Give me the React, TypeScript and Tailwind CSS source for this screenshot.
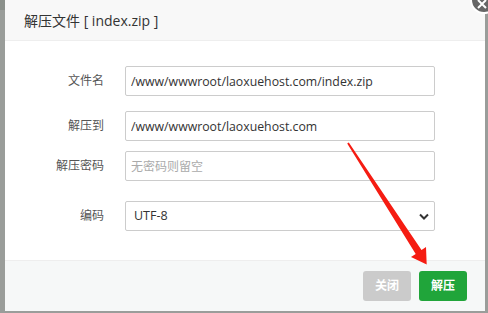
import React from "react";

const FONT = { fontFamily: '"Open Sans", "Noto Sans CJK SC", sans-serif' };

function Row({ label, mt, children }: { label: string; mt: string; children: React.ReactNode }) {
  return (
    <div className={`flex items-center ${mt}`}>
      <div className="w-[99px] text-right text-[12px] text-[#555]">{label}</div>
      <div className="ml-[21px] w-[310px]">{children}</div>
    </div>
  );
}

export default function App() {
  return (
    <div className="relative h-[313px] w-[488px] overflow-hidden bg-[#9a9d9a]" style={FONT}>
      <div className="h-[10px] w-[5px] bg-[#8b908b] absolute left-0 top-0" />
      <div className="ml-[5px] flex h-[311px] w-[480px] flex-col bg-white">
        <div className="flex h-[41px] items-center border-b border-[#eee] bg-[#f8f8f8] pl-[19px] text-[14px] text-[#333]">
          解压文件 [ index.zip ]
        </div>
        <div className="flex-1 pt-[25px]">
          <Row label="文件名" mt="mt-0">
            <input
              readOnly
              value="/www/wwwroot/laoxuehost.com/index.zip"
              className="h-[30px] w-full rounded-[2px] border border-[#ccc] px-[5px] text-[12.3px] text-[#333] outline-none"
              style={FONT}
            />
          </Row>
          <Row label="解压到" mt="mt-[15px]">
            <input
              readOnly
              value="/www/wwwroot/laoxuehost.com"
              className="h-[30px] w-full rounded-[2px] border border-[#ccc] px-[5px] text-[12.3px] text-[#333] outline-none"
              style={FONT}
            />
          </Row>
          <Row label="解压密码" mt="mt-[10px]">
            <input
              readOnly
              placeholder="无密码则留空"
              className="h-[30px] w-full rounded-[2px] border border-[#ccc] px-[5px] text-[12px] text-[#333] outline-none placeholder:text-[#aaa]"
              style={FONT}
            />
          </Row>
          <Row label="编码" mt="mt-[20px]">
            <div className="flex h-[30px] w-full items-center justify-between rounded-[2px] border border-[#ccc] pl-[8px] pr-[5px] text-[12.5px] text-[#333]">
              <span>UTF-8</span>
              <svg width="10" height="7" viewBox="0 0 10 7">
                <path d="M1 1.5 L5 5.5 L9 1.5" fill="none" stroke="#333" strokeWidth="2" />
              </svg>
            </div>
          </Row>
        </div>
        <div className="flex h-[51px] items-center justify-end gap-[8px] border-t border-[#eee] bg-[#f6f8f8] pr-[18px]">
          <button className="h-[30px] w-[48px] rounded-[3px] bg-[#cbcbcb] text-[12px] font-bold text-white">关闭</button>
          <button className="h-[30px] w-[48px] rounded-[3px] bg-[#20a53a] text-[12px] font-bold text-white">解压</button>
        </div>
      </div>
      <div className="absolute left-[470px] top-[-14px] flex h-[28px] w-[28px] items-center justify-center rounded-full border-2 border-white bg-[#666]">
        <svg width="10" height="10" viewBox="0 0 10 10" className="mt-[8px] mr-[4px]">
          <path d="M1 1 L9 9 M9 1 L1 9" stroke="#fff" strokeWidth="2" />
        </svg>
      </div>
      <svg className="pointer-events-none absolute left-0 top-0" width="488" height="313">
        <polygon
          points="347.2,143.5 348.8,142.5 421.5,250.1 426,247 426.7,264.6 411,257 415.7,253.9"
          fill="#f51c12"
        />
      </svg>
    </div>
  );
}
